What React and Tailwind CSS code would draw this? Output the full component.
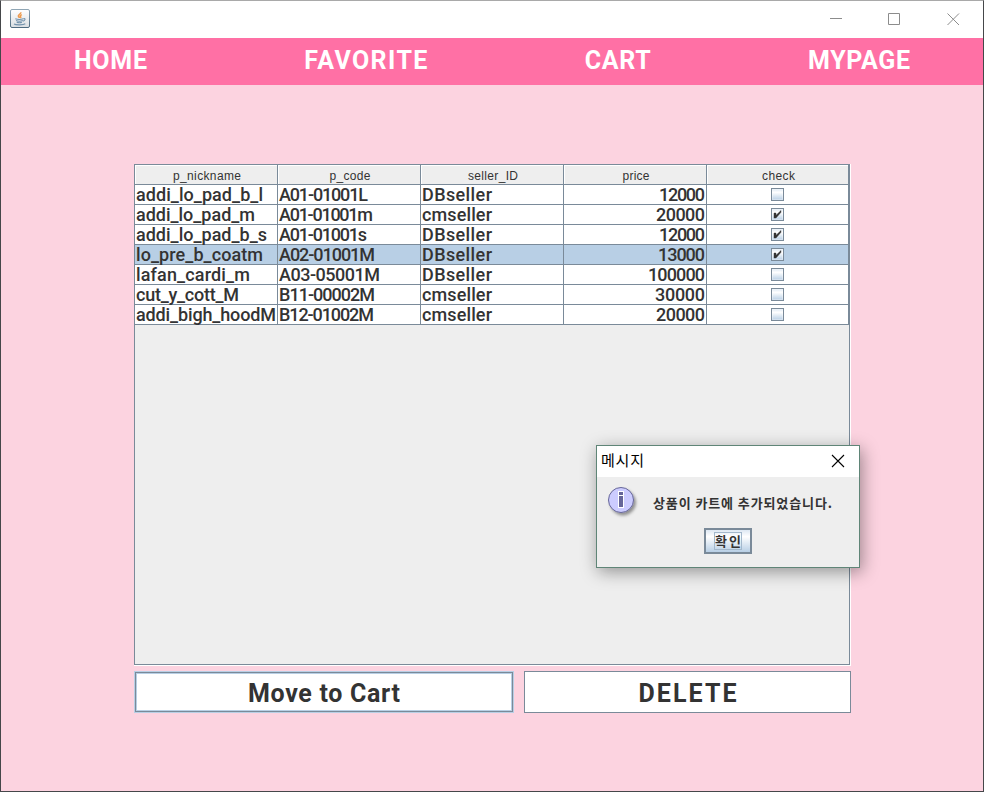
import { useLayoutEffect, useRef } from "react";

// Text tracked so that it spans a given width.
function Fit({ w, children }) {
  const ref = useRef(null);
  useLayoutEffect(() => {
    const el = ref.current;
    el.style.letterSpacing = "0px";
    const natural = el.getBoundingClientRect().width;
    el.style.letterSpacing = `${(w - natural) / Math.max(1, children.length - 1)}px`;
  }, [w, children]);
  return (
    <span className="block whitespace-pre" style={{ width: w }}>
      <span ref={ref} className="inline-block">{children}</span>
    </span>
  );
}

const NAV = [["HOME", 73], ["FAVORITE", 123], ["CART", 66], ["MYPAGE", 102]];
const HEAD = [["p_nickname", 68], ["p_code", 41], ["seller_ID", 50], ["price", 27], ["check", 33]];
const ROWS = [
  [["addi_lo_pad_b_l", 127], ["A01-01001L", 89], ["DBseller", 70], ["12000", 46], false],
  [["addi_lo_pad_m", 119], ["A01-01001m", 94], ["cmseller", 70], ["20000", 49], true],
  [["addi_lo_pad_b_s", 131], ["A01-01001s", 88], ["DBseller", 70], ["12000", 46], true],
  [["lo_pre_b_coatm", 127], ["A02-01001M", 96], ["DBseller", 70], ["13000", 47], true],
  [["lafan_cardi_m", 114], ["A03-05001M", 101], ["DBseller", 70], ["100000", 57], false],
  [["cut_y_cott_M", 103], ["B11-00002M", 96], ["cmseller", 70], ["30000", 50], false],
  [["addi_bigh_hoodM", 140], ["B12-01002M", 95], ["cmseller", 70], ["20000", 49], false],
];
const COLS = "grid grid-cols-[143px_143px_143px_143px_142px]";

function JavaIcon() {
  return (
    <svg width="20" height="19" viewBox="0 0 20 19" fill="none">
      <defs>
        <linearGradient id="jv" x1="0" y1="0" x2="0" y2="1">
          <stop offset="0" stopColor="#fff" />
          <stop offset="1" stopColor="#d9dee2" />
        </linearGradient>
        <linearGradient id="je" x1="0" y1="0" x2="0" y2="1">
          <stop offset="0" stopColor="#8fa5b4" />
          <stop offset="1" stopColor="#4e6b80" />
        </linearGradient>
      </defs>
      <rect x="0.5" y="0.5" width="19" height="18" rx="1.5" fill="url(#jv)" stroke="url(#je)" />
      <path d="M10.8 3.2c.5 1.8-3.3 2.4-2.4 4.2.3.7 1 1 .9 1.6M11.8 5.6c-1.6.8-2 1.4-1.2 2.2.4.5.1.9-.3 1.2" stroke="#ee9a4d" strokeWidth="1.5" />
      <path d="M5.3 9.8c2 .7 6 .7 8 0M6 11.6c1.6.6 5 .6 6.8 0M6.7 13.3c1.4.5 4 .5 5.2 0M13.5 9.7c2.2-.5 2 1.8-.5 2.4M4 15c1.8 1.2 9.5 1.1 11.3-.2" stroke="#7292ac" strokeWidth="1.1" />
    </svg>
  );
}

function Check({ on }) {
  return (
    <span className="flex h-[13px] w-[13px] border border-[#7a8a99] bg-linear-to-b from-[#dde8f3] via-white via-30% to-[#b8cfe5] shadow-[inset_0_0_0_1px_rgba(255,255,255,0.35)]">
      {on && (
        <svg width="11" height="11" viewBox="0 0 11 11" fill="#333">
          <path d="M2 4h2v2.300L9 1.500V3.300L4 9H2Z" stroke="#333" strokeWidth="0.4" />
        </svg>
      )}
    </span>
  );
}

function Dialog() {
  return (
    <div className="absolute left-[595px] top-[444px] flex h-[123px] w-[264px] flex-col border border-[#5f8577] bg-[#eeeeee] shadow-[2px_4px_16px_rgba(0,0,0,0.38)] font-['Noto_Sans_CJK_KR',sans-serif]">
      <div className="flex h-[31px] shrink-0 items-center justify-between bg-white pl-1 pr-[14px] text-[15px] leading-[30px] text-black">
        <span className="-mt-[3px]"><Fit w={43}>메시지</Fit></span>
        <svg className="-mt-px" width="14" height="14" viewBox="0 0 14 14" stroke="#000" strokeWidth="1.1">
          <path d="M1 1 13 13M13 1 1 13" />
        </svg>
      </div>
      <div className="flex h-[51px] shrink-0 pl-[9px]">
        <svg className="mt-[7px] shrink-0" width="34" height="36" viewBox="0 0 34 36">
          <defs>
            <filter id="sh" x="-30%" y="-30%" width="170%" height="170%">
              <feDropShadow dx="2" dy="2.5" stdDeviation="1.5" floodColor="#000" floodOpacity="0.4" />
            </filter>
          </defs>
          <circle cx="15" cy="16" r="12.5" fill="#ccccff" stroke="#666699" filter="url(#sh)" />
          <path d="M12 7h6v17h-6z" fill="#fff" />
          <path d="M13 8h4v3h-4zM13 12h4v11h-4z" fill="#666699" />
        </svg>
        <div className="ml-[13px] mt-[17px] text-[13px] font-bold leading-[18px] text-[#333]">
          <Fit w={179}>상품이 카트에 추가되었습니다.</Fit>
        </div>
      </div>
      <button className="ml-[107px] flex h-[26px] w-[48px] items-center justify-center border-2 border-[#7a8a99] bg-linear-to-b from-[#dde8f3] via-white via-30% to-[#b8cfe5] text-[13px] font-bold text-[#333]">
        <span className="flex h-[18px] w-[28px] items-center justify-center border border-[#a3b8cc] leading-[16px]">
          <Fit w={26}>확인</Fit>
        </span>
      </button>
    </div>
  );
}

export default function App() {
  return (
    <div className="relative flex h-[792px] w-[984px] flex-col overflow-hidden border border-[#45474a] border-t-[#a9a9a9] bg-[#fcd3e0] font-[Roboto,sans-serif]">
      <header className="flex h-[37px] shrink-0 items-start bg-white pl-[9px]">
        <div className="mt-2"><JavaIcon /></div>
        <div className="ml-auto mr-[23px] mt-[11px] flex gap-[46px]">
          {["M1 6.500H13", "M.5 1.500h11v11H.5z", "M.5 1.500 12 13M12 1.500.5 13"].map((d) => (
            <svg key={d} width="13" height="14" viewBox="0 0 13 14" fill="none" stroke="#8c8c8c">
              <path d={d} />
            </svg>
          ))}
        </div>
      </header>
      <nav className="flex h-[47px] shrink-0 justify-between bg-[#ff70a5] pl-[73px] pr-[73px] pt-[8px] text-[25px] font-bold leading-[30px] text-white">
        {NAV.map(([t, w]) => <Fit key={t} w={w}>{t}</Fit>)}
      </nav>

      <main className="ml-[133px] mt-[79px] w-[717px]">
        <section className="h-[502px] border-b border-r border-white">
          <div className="h-[501px] border border-[#7a8a99] bg-[#eeeeee] text-[#333]">
            <div className={`${COLS} h-[20px] font-['Liberation_Sans',sans-serif] text-[12px] leading-[20px]`}>
              {HEAD.map(([t, w]) => (
                <div key={t} className="flex h-[20px] justify-center border-b border-r border-[#7a8a99] pl-[2px] pt-px shadow-[inset_1px_1px_0_white]">
                  <Fit w={w}>{t}</Fit>
                </div>
              ))}
            </div>
            {ROWS.map((r, i) => (
              <div key={i} className={`${COLS} h-[20px] text-[18px] font-medium leading-[20px] ${i === 3 ? "bg-[#b8cfe5]" : "bg-white"}`}>
                {r.map((c, j) => (
                  <div key={j} className={`flex h-[20px] border-b border-r border-[#7a8a99] ${j === 3 ? "justify-end pr-px" : j === 4 ? "items-center justify-center pr-px" : "pl-px"}`}>
                    {j === 4 ? <Check on={c} /> : <Fit w={c[1]}>{c[0]}</Fit>}
                  </div>
                ))}
              </div>
            ))}
          </div>
        </section>
        <div className="mt-[5px] flex h-[42px] gap-[10px] text-[25px] font-bold text-[#333]">
          <button className="flex w-[380px] border border-[#b8cfe5]">
            <span className="flex h-full w-full items-center justify-center border border-[#7a8a99] bg-white pt-[4px] shadow-[inset_0_0_0_1px_#b8cfe5]">
              <Fit w={152}>Move to Cart</Fit>
            </span>
          </button>
          <button className="flex w-[327px] items-center justify-center border border-[#7a8a99] bg-white pt-[4px]">
            <Fit w={98}>DELETE</Fit>
          </button>
        </div>
      </main>
      <Dialog />
    </div>
  );
}
